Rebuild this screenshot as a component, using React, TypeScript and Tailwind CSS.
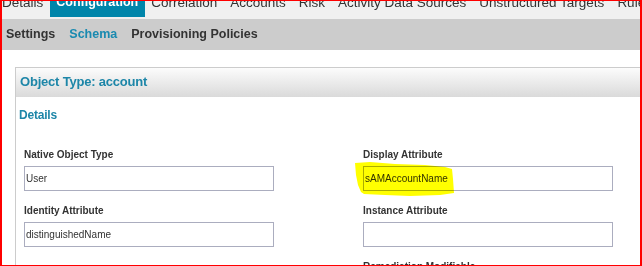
import React from "react";

const TABS = [
  "Details",
  "Configuration",
  "Correlation",
  "Accounts",
  "Risk",
  "Activity Data Sources",
  "Unstructured Targets",
  "Rules",
];

const SUB_TABS = ["Settings", "Schema", "Provisioning Policies"];

type FieldProps = { label: string; value?: string; inputless?: boolean };

function Field({ label, value = "", inputless = false }: FieldProps) {
  return (
    <div className="flex flex-col">
      <label className="mb-[5px] text-[10px] font-bold leading-[12px] text-[#333]">
        {label}
      </label>
      {!inputless && (
        <div className="flex h-[25px] w-[250px] items-center border border-[#abadbf] bg-white pl-[1px] text-[10px] leading-[12px] text-[#333]">
          {value}
        </div>
      )}
    </div>
  );
}

export default function App() {
  return (
    <div
      className="relative h-[266px] w-[642px] overflow-hidden border-x-2 border-y border-[#ff0000] bg-white"
      style={{ fontFamily: '"Liberation Sans", Arial, sans-serif' }}
    >
      {/* top tabs, clipped at the top edge */}
      <div className="h-[18px] overflow-hidden whitespace-nowrap bg-[#f0f0f0]">
        <div className="-ml-[6.5px] -mt-[8px] flex">
          {TABS.map((t) =>
            t === "Configuration" ? (
              <div
                key={t}
                className="h-[24px] bg-[#0085aa] px-[6.5px] pt-[2px] text-[12.5px] font-bold leading-[15px] text-white"
              >
                {t}
              </div>
            ) : (
              <div
                key={t}
                className="h-[24px] px-[6.5px] pt-[2px] text-[13.5px] leading-[15px] text-[#333]"
              >
                {t}
              </div>
            )
          )}
        </div>
      </div>

      {/* sub tabs */}
      <div className="flex h-[31px] items-center gap-[14px] bg-[#cccccc] pb-[1px] pl-[4px] text-[12.5px] font-bold">
        {SUB_TABS.map((t) => (
          <span
            key={t}
            className={t === "Schema" ? "text-[#1a8ab0]" : "text-[#333]"}
          >
            {t}
          </span>
        ))}
      </div>

      {/* object type panel */}
      <div className="ml-[13px] mt-[17px] border-l border-t border-[#cccccc]">
        <div className="flex h-[29px] items-center bg-gradient-to-b from-[#fcfcfc] to-[#dadada] pb-[2px] pl-[4px] text-[13px] font-bold tracking-[-0.2px] text-[#1d86a8]">
          Object Type: account
        </div>

        <div className="pl-[3px] pt-[11px] text-[12px] font-bold leading-[14px] tracking-[-0.2px] text-[#1d86a8]">
          Details
        </div>

        <div className="mt-[27px] grid grid-cols-[250px_250px] gap-x-[89px] gap-y-[14px] pl-[8px]">
          <Field label="Native Object Type" value="User" />
          <Field label="Display Attribute" value="sAMAccountName" />
          <Field label="Identity Attribute" value="distinguishedName" />
          <Field label="Instance Attribute" />
          <div />
          <Field label="Remediation Modifiable" inputless />
        </div>
      </div>

      {/* highlighter mark */}
      <svg
        className="pointer-events-none absolute left-[348px] top-[158px] mix-blend-multiply"
        width="110"
        height="42"
        viewBox="0 0 110 42"
      >
        <path
          d="M5 4 L20 3 L45 5 L75 6 L95 8 L102 10 L103 20 L104 34 L90 36 L60 37 L35 36 L14 35 L11 33 L8 26 L6 16 Z"
          fill="#ffff00"
        />
      </svg>
    </div>
  );
}
